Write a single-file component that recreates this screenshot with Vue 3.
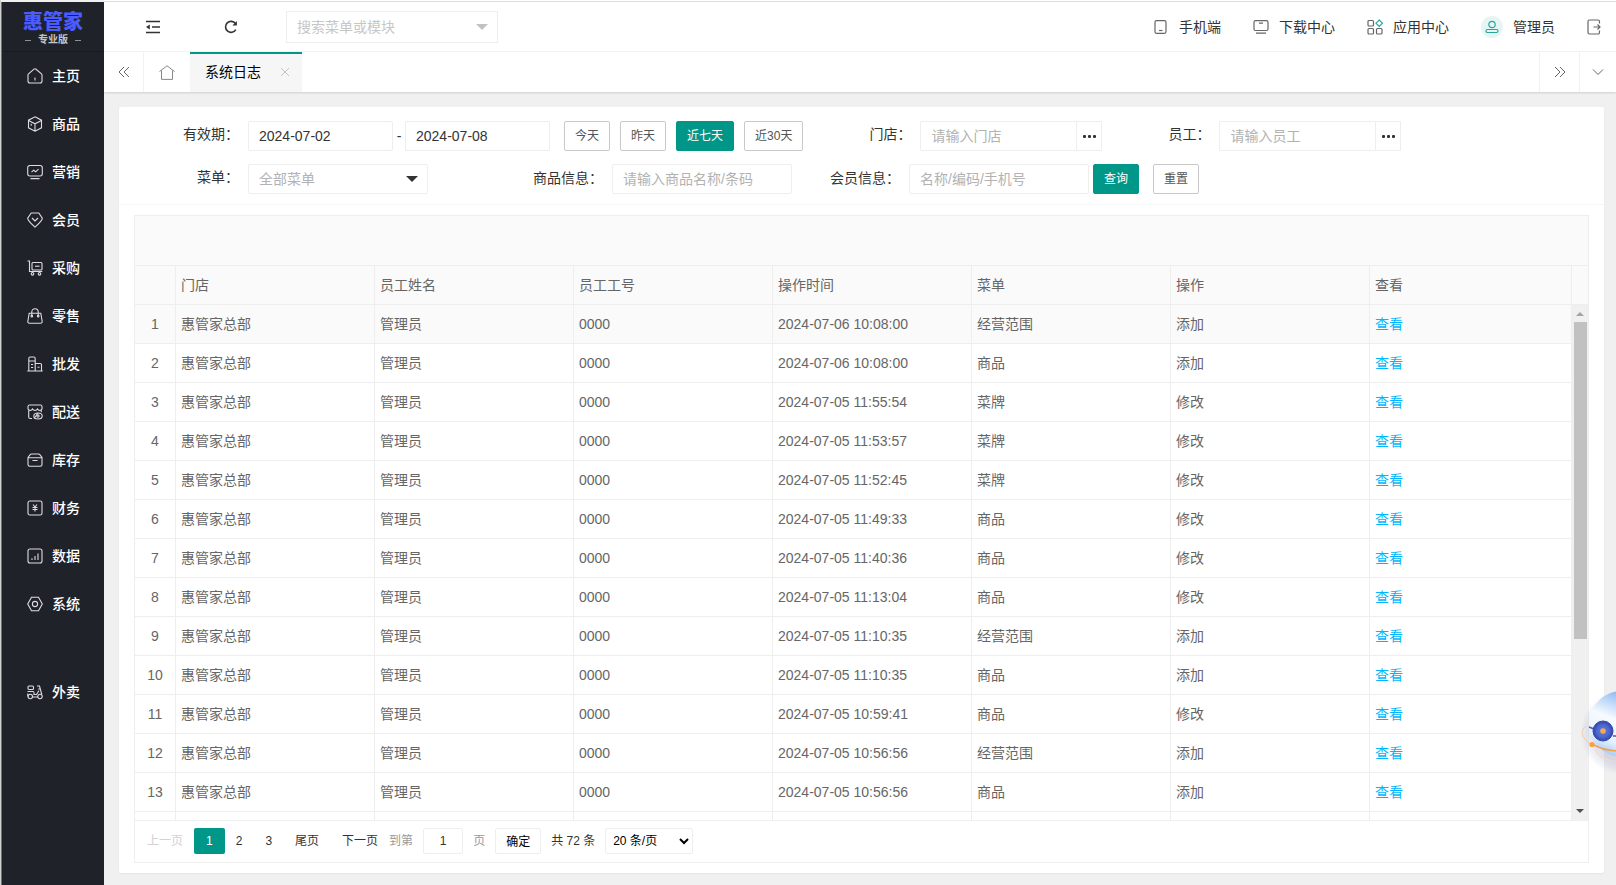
<script setup>
import { ref } from 'vue'

const menu = [
  { name: '主页', icon: 'home' },
  { name: '商品', icon: 'goods' },
  { name: '营销', icon: 'marketing' },
  { name: '会员', icon: 'member' },
  { name: '采购', icon: 'purchase' },
  { name: '零售', icon: 'retail' },
  { name: '批发', icon: 'wholesale' },
  { name: '配送', icon: 'delivery' },
  { name: '库存', icon: 'stock' },
  { name: '财务', icon: 'finance' },
  { name: '数据', icon: 'data' },
  { name: '系统', icon: 'system' },
  { name: '外卖', icon: 'takeout', apart: true }
]

const icons = {
  home: '<path d="M1.5 5.8 7 1.2a1.6 1.6 0 0 1 2 0l5.500 4.600a1.500 1.500 0 0 1 .5 1.200v6a2 2 0 0 1-2 2H3a2 2 0 0 1-2-2V7a1.500 1.500 0 0 1 .5-1.200zM8 9.500v3"/>',
  goods: '<path d="M8 .8 14.500 4.200v7.600L8 15.200 1.500 11.800V4.200zM1.500 4.400 8 7.800l6.500-3.400M8 7.800v7.200M4.200 7.800v2"/>',
  marketing: '<rect x=".7" y="1.500" width="14.600" height="10.500" rx="2.200"/><path d="M3.500 14.600h9M4.500 8.200l2.200-2 2 1.600 2.800-2.600"/>',
  member: '<path d="M4.200 1h7.600l3.500 5.200c0 2.500-4.500 6.300-7.300 9C5.200 12.500.7 8.700.7 6.200zM5 6l3 3 3-3"/>',
  purchase: '<path d="M.5 1h2v10.500h12.800"/><rect x="5" y="2.500" width="10" height="7.500" rx="1"/><path d="M8 6.200h4.500"/><circle cx="5.500" cy="13.800" r="1.300"/><circle cx="12.500" cy="13.800" r="1.300"/>',
  retail: '<path d="M2.200 5.200h11.600l1.400 8.300a1.500 1.500 0 0 1-1.500 1.700H2.300a1.500 1.500 0 0 1-1.500-1.700zM4.800 8.200V4a3.200 3.200 0 0 1 6.400 0v4.200"/><circle cx="4.800" cy="8.200" r=".8"/><circle cx="11.200" cy="8.200" r=".8"/>',
  wholesale: '<path d="M.3 15h15.400M1.800 15V2.500A1.500 1.500 0 0 1 3.300 1h3.400a1.500 1.500 0 0 1 1.500 1.500V15M8.200 7.500h5a1.300 1.300 0 0 1 1.300 1.300V15M1.800 5h6.400M4 8.500h2.200M4 11.500h2.200M10.500 11.300h2"/>',
  delivery: '<path d="M2.500 1h11a1.500 1.500 0 0 1 1.500 1.300V5c-1 1.900-3.500 1.900-4.500 0-1 1.900-4 1.900-5 0C4.500 6.900 2 6.900 1 5V2.300A1.500 1.500 0 0 1 2.500 1zM1.700 6.500V13a1.500 1.500 0 0 0 1.500 1.500H5M14.300 6.500v1.800"/><ellipse cx="11" cy="12" rx="4.200" ry="3"/><circle cx="11" cy="12" r="1.100"/><path d="M7 14.500 11 9"/>',
  stock: '<path d="M1 5.500 3 2.800A2 2 0 0 1 4.700 2h6.600a2 2 0 0 1 1.700.8l2 2.700V12.500a1.700 1.700 0 0 1-1.700 1.700H2.700A1.700 1.700 0 0 1 1 12.500zM1 5.800h14M5.500 8.500h5"/>',
  finance: '<rect x="1" y="1" width="14" height="14" rx="1.800"/><path d="M6 4.500 8 7l2-2.500M8 7v4.500M5.500 7.500h5M5.500 9.500h5"/>',
  data: '<rect x="1" y="1" width="14" height="14" rx="2"/><path d="M5 10.200V12M8 8v4M11 5.500V12"/>',
  system: '<path d="M4.500 1.200h7L15.300 8l-3.800 6.800h-7L.7 8z"/><circle cx="8" cy="8" r="2.600"/>',
  takeout: '<rect x="1" y="2" width="5.500" height="3.500" rx="1"/><path d="M.5 7.500H6a1.500 1.500 0 0 1 1 1.500v1.500h2.500L12 6.500M10 2h2.500l2.300 8.500M11.300 5h2.200M.8 9.500v3M5.500 13h5.500"/><circle cx="3.300" cy="12.500" r="2.200"/><circle cx="13" cy="12.500" r="2.200"/>'
}

const rangeButtons = ['今天', '昨天', '近七天', '近30天']
const activeRange = ref('近七天')
const dateFrom = ref('2024-07-02')
const dateTo = ref('2024-07-08')
const jumpPage = ref('1')

const columns = ['门店', '员工姓名', '员工工号', '操作时间', '菜单', '操作', '查看']
const rows = [
  ['2024-07-06 10:08:00', '经营范围', '添加'],
  ['2024-07-06 10:08:00', '商品', '添加'],
  ['2024-07-05 11:55:54', '菜牌', '修改'],
  ['2024-07-05 11:53:57', '菜牌', '修改'],
  ['2024-07-05 11:52:45', '菜牌', '修改'],
  ['2024-07-05 11:49:33', '商品', '修改'],
  ['2024-07-05 11:40:36', '商品', '修改'],
  ['2024-07-05 11:13:04', '商品', '修改'],
  ['2024-07-05 11:10:35', '经营范围', '添加'],
  ['2024-07-05 11:10:35', '商品', '添加'],
  ['2024-07-05 10:59:41', '商品', '修改'],
  ['2024-07-05 10:56:56', '经营范围', '添加'],
  ['2024-07-05 10:56:56', '商品', '添加']
].map(([time, module, action]) => ({ store: '惠管家总部', staff: '管理员', code: '0000', time, module, action }))
</script>

<template>
  <div class="app">
    <aside class="sidebar">
      <div class="logo">
        <strong>惠管家</strong>
        <span class="edition">专业版</span>
      </div>
      <nav>
        <a v-for="m in menu" :key="m.name" href="#" class="menu-item" :class="{ apart: m.apart }">
          <svg viewBox="0 0 16 16" v-html="icons[m.icon]"></svg>
          <span>{{ m.name }}</span>
        </a>
      </nav>
    </aside>

    <div class="main">
      <header class="topbar">
        <button type="button" class="icon-btn" aria-label="收起菜单">
          <svg width="14" height="14" viewBox="0 0 14 14" stroke="#333" stroke-width="1.500" fill="none">
            <path d="M0 1.500h14M6 6.900h8M0 12.500h14" /><path d="M0 7 3.800 4.500v5z" fill="#333" stroke="none" />
          </svg>
        </button>
        <button type="button" class="icon-btn refresh" aria-label="刷新">
          <svg width="14" height="14" viewBox="0 0 14 14" stroke="#333" stroke-width="1.600" fill="none">
            <path d="M11.800 9.600A5.500 5.500 0 1 1 11.500 3.600" /><path d="M12.900.9v4.500H8.400z" fill="#333" stroke="none" />
          </svg>
        </button>
        <div class="menu-search">
          <input type="text" placeholder="搜索菜单或模块" aria-label="搜索菜单或模块" />
          <svg class="caret" width="12" height="6" viewBox="0 0 12 6"><path d="M0 0h12L6 6z" fill="#c2c2c2" /></svg>
        </div>
        <div class="top-links">
          <a href="#">
            <svg viewBox="0 0 16 16"><rect x="2" y="1.700" width="11" height="12.600" rx="1.500" /><path d="M6 11.500h3.500" /></svg>手机端
          </a>
          <a href="#">
            <svg viewBox="0 0 16 16"><rect x="1" y="1.700" width="14" height="9.800" rx="1.500" /><path d="M6 4.200h4M3 14.200h10" /></svg>下载中心
          </a>
          <a href="#">
            <svg viewBox="0 0 16 16">
              <rect x="1" y="1.500" width="5.500" height="5.500" rx="1" /><rect x="1" y="9.500" width="5.500" height="5.500" rx="1" />
              <rect x="9.500" y="9.500" width="5.500" height="5.500" rx="1" /><path class="teal" d="M12.200 1 15.400 4.200 12.200 7.400 9 4.200z" />
            </svg>应用中心
          </a>
          <a href="#">
            <span class="avatar">
              <svg viewBox="0 0 16 16"><circle class="teal" cx="8" cy="5.500" r="3.200" /><rect class="teal" x="2" y="10.500" width="12" height="3" rx="1.500" /></svg>
            </span>管理员
          </a>
          <button type="button" class="exit" aria-label="退出">
            <svg viewBox="0 0 14 16"><path d="M12.500 4.500V2.500A1.500 1.500 0 0 0 11 1H2.500A1.500 1.500 0 0 0 1 2.500v11A1.500 1.500 0 0 0 2.500 15H11a1.500 1.500 0 0 0 1.500-1.500v-2M6.500 8H13M10.500 5.500 13 8l-2.500 2.500" /></svg>
          </button>
        </div>
      </header>

      <div class="tabs">
        <button type="button" class="tab-ctl prev" aria-label="向左">
          <svg width="12" height="12" viewBox="0 0 12 12"><path d="M6 1 1 6l5 5M11 1 6 6l5 5" /></svg>
        </button>
        <button type="button" class="tab-ctl home" aria-label="主页">
          <svg width="16" height="15" viewBox="0 0 16 15"><path d="M.5 6.500 8 .8l7.500 5.700M2.500 5.500v8.900h11V5.500" /></svg>
        </button>
        <div class="tab">
          <span>系统日志</span>
          <button type="button" aria-label="关闭">
            <svg width="8" height="8" viewBox="0 0 8 8"><path d="M0 0l8 8M8 0 0 8" /></svg>
          </button>
        </div>
        <button type="button" class="tab-ctl next" aria-label="向右">
          <svg width="12" height="12" viewBox="0 0 12 12"><path d="M1 1l5 5-5 5M6 1l5 5-5 5" /></svg>
        </button>
        <button type="button" class="tab-ctl more" aria-label="更多">
          <svg width="12" height="12" viewBox="0 0 12 12"><path d="M1 3.500l5 5 5-5" /></svg>
        </button>
      </div>

      <main class="card">
        <form class="filters" @submit.prevent>
          <div class="filter-row">
            <label class="first raised" for="from">有效期：</label>
            <input id="from" v-model="dateFrom" class="date" type="text" />
            <span class="dash">-</span>
            <input v-model="dateTo" class="date" type="text" aria-label="结束日期" />
            <div class="ranges">
              <button
                v-for="r in rangeButtons" :key="r" type="button" class="btn" :class="{ primary: r === activeRange }"
                @click="activeRange = r"
              >{{ r }}</button>
            </div>
            <label class="raised" for="store">门店：</label>
            <div class="picker"><input id="store" type="text" placeholder="请输入门店" /><button type="button" aria-label="选择门店"><i></i><i></i><i></i></button></div>
            <label class="raised" for="staff">员工：</label>
            <div class="picker"><input id="staff" type="text" placeholder="请输入员工" /><button type="button" aria-label="选择员工"><i></i><i></i><i></i></button></div>
          </div>
          <div class="filter-row">
            <label class="first raised" for="module">菜单：</label>
            <div class="select-box">
              <select id="module"><option>全部菜单</option></select>
              <svg class="caret" width="12" height="6" viewBox="0 0 12 6"><path d="M0 0h12L6 6z" fill="#333" /></svg>
            </div>
            <label class="wide" for="goods">商品信息：</label>
            <input id="goods" class="text" type="text" placeholder="请输入商品名称/条码" />
            <label for="member">会员信息：</label>
            <input id="member" class="text" type="text" placeholder="名称/编码/手机号" />
            <div class="submit">
              <button type="submit" class="btn primary">查询</button>
              <button type="reset" class="btn">重置</button>
            </div>
          </div>
        </form>

        <section class="grid">
          <div class="grid-tools"></div>
          <div class="grid-head">
            <table>
              <colgroup><col class="c-no" /><col v-for="n in 6" :key="n" class="c-std" /><col /></colgroup>
              <thead>
                <tr><th></th><th v-for="c in columns" :key="c">{{ c }}</th></tr>
              </thead>
            </table>
            <div class="head-gap"></div>
          </div>
          <div class="grid-body">
            <div class="rows">
              <table aria-label="系统日志">
                <colgroup><col class="c-no" /><col v-for="n in 6" :key="n" class="c-std" /><col /></colgroup>
                <tbody>
                  <tr v-for="(r, i) in rows" :key="i" :class="{ hover: i === 0 }">
                    <td class="no">{{ i + 1 }}</td>
                    <td>{{ r.store }}</td>
                    <td>{{ r.staff }}</td>
                    <td>{{ r.code }}</td>
                    <td>{{ r.time }}</td>
                    <td>{{ r.module }}</td>
                    <td>{{ r.action }}</td>
                    <td><a href="#">查看</a></td>
                  </tr>
                  <tr><td v-for="n in 8" :key="n"></td></tr>
                </tbody>
              </table>
            </div>
            <div class="scrollbar">
              <svg width="8" height="4" viewBox="0 0 8 4"><path d="M0 4h8L4 0z" fill="#a3a3a3" /></svg>
              <div class="track"><div class="thumb"></div></div>
              <svg width="8" height="4" viewBox="0 0 8 4"><path d="M0 0h8L4 4z" fill="#505050" /></svg>
            </div>
          </div>
          <div class="pager">
            <button type="button" class="page" disabled>上一页</button>
            <button type="button" class="page current">1</button>
            <button type="button" class="page">2</button>
            <button type="button" class="page">3</button>
            <button type="button" class="page">尾页</button>
            <button type="button" class="page">下一页</button>
            <label for="jump">到第</label>
            <input id="jump" v-model="jumpPage" type="text" />
            <span class="unit">页</span>
            <button type="button" class="go">确定</button>
            <span class="total">共 72 条</span>
            <select aria-label="每页条数"><option>20 条/页</option></select>
          </div>
        </section>
      </main>
    </div>

    <svg class="assistant" width="44" height="100" viewBox="0 0 44 100" aria-hidden="true">
      <defs>
        <linearGradient id="ball" x1=".75" y1="0" x2=".35" y2="1">
          <stop offset="0" stop-color="#6d9fee" /><stop offset=".25" stop-color="#b4d2f8" /><stop offset=".5" stop-color="#f7fbff" /><stop offset=".8" stop-color="#e3f2fd" /><stop offset="1" stop-color="#a9c8f2" />
        </linearGradient>
        <radialGradient id="shade"><stop offset=".7" stop-color="#7f86bd" stop-opacity=".24" /><stop offset="1" stop-color="#7f86bd" stop-opacity="0" /></radialGradient>
        <radialGradient id="eye"><stop offset="0" stop-color="#5f7fe0" /><stop offset=".6" stop-color="#4d68d0" /><stop offset="1" stop-color="#3345a8" /></radialGradient>
      </defs>
      <circle cx="50" cy="53" r="42" fill="url(#shade)" />
      <circle cx="50" cy="44" r="33" fill="url(#ball)" />
      <path d="M17 47l5 2M41 56h3" stroke="#4a5bb8" stroke-width="1.500" />
      <circle cx="31" cy="51" r="10" fill="url(#eye)" stroke="#3548ae" stroke-width="1" />
      <circle cx="31" cy="51" r="2.800" fill="#f6a94f" />
      <path d="M14 46C7 51 10 59 20 65" fill="none" stroke="#f3c9a4" stroke-width="1" />
      <path d="M20 64q10 6 24 7" fill="none" stroke="#f7a04a" stroke-width="1.500" />
      <path d="M24 69q-1 8 20 13" fill="none" stroke="#f8d9c4" stroke-width="1.200" />
      <circle cx="20" cy="64.500" r="2.600" fill="#f9a040" />
    </svg>
  </div>
</template>

<style>
body {
  margin: 0;
  background: #f0f0f0;
}
</style>

<style scoped>
.app,
.app * {
  box-sizing: border-box;
}
.app {
  display: flex;
  height: 100vh;
  min-height: 600px;
  overflow: hidden;
  border-left: 1px solid #cfd2cf;
  font: 14px/24px "Liberation Sans", "Noto Sans CJK SC", sans-serif;
  color: #333;
}
button,
input,
select {
  margin: 0;
  font: inherit;
  color: inherit;
  outline: 0;
}
button {
  padding: 0;
  border: 0;
  background: none;
  cursor: pointer;
}
a {
  color: inherit;
  text-decoration: none;
}
svg {
  display: block;
  flex: none;
}

.sidebar {
  flex: none;
  width: 103px;
  margin-top: 2px;
  border-left: 1px solid #6e7375;
  background: #20222a;
  color: #fff;
}
.logo {
  display: flex;
  flex-direction: column;
  align-items: center;
  height: 50px;
  padding-top: 9px;
  border-bottom: 1px solid #1a1c23;
}
.logo strong {
  font-size: 20px;
  line-height: 22px;
  font-weight: 900;
  color: #4a5cff;
}
.edition {
  display: flex;
  align-items: center;
  gap: 7px;
  font-size: 10px;
  line-height: 14px;
  font-weight: 700;
  color: #c4c6ca;
}
.edition::before,
.edition::after {
  content: "";
  width: 6px;
  height: 1px;
  background: #8e9096;
}
.menu-item {
  display: flex;
  align-items: center;
  gap: 9px;
  height: 48px;
  padding-left: 25px;
  font-weight: 500;
}
.menu-item.apart {
  margin-top: 40px;
}
.menu-item svg {
  width: 16px;
  height: 16px;
  fill: none;
  stroke: #dcdde0;
  stroke-width: 1.1;
}

.main {
  display: flex;
  flex: 1;
  flex-direction: column;
  min-width: 0;
  padding-top: 1px;
  background: linear-gradient(#fff, #fff) 0 0 / 100% 1px no-repeat #f0f0f0;
}
.topbar {
  display: flex;
  flex: none;
  align-items: center;
  height: 51px;
  padding-right: 15px;
  border-top: 1px solid #dcdcdc;
  border-bottom: 1px solid #f4f4f4;
  background: #fff;
}
.icon-btn {
  display: flex;
  align-items: center;
  justify-content: center;
  width: 40px;
  height: 40px;
  margin-left: 29px;
}
.icon-btn.refresh {
  margin-left: 38px;
}
.menu-search {
  position: relative;
  width: 212px;
  margin-left: 35px;
}
.menu-search input {
  display: block;
  width: 100%;
  height: 32px;
  padding: 0 10px;
  border: 1px solid #eee;
  background: #fff;
}
.menu-search input::placeholder {
  color: #c6c6c6;
}
.caret {
  position: absolute;
  top: 50%;
  right: 10px;
  margin-top: -3px;
  pointer-events: none;
}
.top-links {
  display: flex;
  align-items: center;
  gap: 32px;
  margin-left: auto;
}
.top-links a {
  display: flex;
  align-items: center;
  gap: 10px;
}
.top-links svg {
  width: 16px;
  height: 16px;
  fill: none;
  stroke: #666;
  stroke-width: 1.2;
}
.top-links .exit svg {
  width: 14px;
}
.top-links .teal {
  stroke: #2aa79b;
}
.avatar {
  display: flex;
  align-items: center;
  justify-content: center;
  width: 22px;
  height: 22px;
  border-radius: 50%;
  background: #e6f5f3;
}

.tabs {
  display: flex;
  flex: none;
  height: 40px;
  background: #fff;
  box-shadow: 0 1px 2px rgba(0, 0, 0, 0.14);
}
.tabs svg {
  fill: none;
  stroke: #666;
  stroke-width: 1;
}
.tab-ctl {
  display: flex;
  align-items: center;
  justify-content: center;
  width: 40px;
  border-left: 1px solid #f2f2f2;
}
.tab-ctl.prev {
  width: 39px;
  border-left: 0;
}
.tab-ctl.home {
  width: 47px;
}
.tab-ctl.home svg {
  stroke: #888;
}
.tab-ctl.next {
  margin-left: auto;
}
.tab-ctl.more {
  width: 37px;
}
.tab {
  display: flex;
  align-items: center;
  gap: 20px;
  padding: 0 13px 2px 15px;
  border-top: 2px solid #009688;
  background: #f6f6f6;
  color: #000;
}
.tab svg {
  stroke: #c2c2c2;
}

.card {
  display: flex;
  flex: 1;
  flex-direction: column;
  min-height: 0;
  margin: 15px 12px 12px 15px;
  border-radius: 2px;
  background: #fff;
  box-shadow: 0 1px 2px rgba(0, 0, 0, 0.05);
}
.filters {
  display: flex;
  flex: none;
  flex-direction: column;
  gap: 13px;
  padding: 14px 0 10px;
  border-bottom: 1px solid #f6f6f6;
}
.filter-row {
  display: flex;
  flex-wrap: wrap;
}
.filter-row label {
  width: 117px;
  padding-right: 9px;
  line-height: 28px;
  text-align: right;
}
.filter-row label.raised {
  line-height: 26px;
}
.filter-row label.first {
  width: 129px;
}
.filter-row label.wide {
  width: 184px;
}
.filters input,
.filters select {
  height: 30px;
  padding: 0 10px;
  border: 1px solid #eee;
  border-radius: 2px;
  background: #fff;
}
.filters input::placeholder {
  color: #b2b2b2;
}
.filters input.date {
  width: 145px;
}
.filters input.text {
  width: 180px;
}
.dash {
  width: 12px;
  line-height: 30px;
  text-align: center;
}
.ranges {
  display: flex;
  gap: 10px;
  margin-left: 14px;
}
.btn {
  height: 30px;
  padding: 0 10px;
  border: 1px solid #c9c9c9;
  border-radius: 2px;
  background: #fff;
  font-size: 12px;
  color: #555;
}
.btn.primary {
  border-color: #009688;
  background: #009688;
  color: #fff;
}
.picker {
  display: flex;
  width: 182px;
}
.picker input {
  flex: 1;
  min-width: 0;
  border-right: 0;
  border-radius: 2px 0 0 2px;
}
.picker button {
  display: flex;
  align-items: center;
  justify-content: center;
  gap: 2px;
  width: 26px;
  height: 30px;
  border: 1px solid #eee;
}
.picker i {
  width: 3px;
  height: 3px;
  border-radius: 1px;
  background: #333;
}
.select-box {
  position: relative;
  width: 180px;
}
.select-box select {
  display: block;
  width: 100%;
  appearance: none;
  color: #b2b2b2;
}
.submit {
  display: flex;
  gap: 14px;
  margin-left: 4px;
}

.grid {
  display: flex;
  flex: 1;
  flex-direction: column;
  min-height: 0;
  margin: 10px 15px;
  border: 1px solid #eee;
  color: #666;
}
.grid-tools {
  flex: none;
  height: 50px;
  border-bottom: 1px solid #eee;
  background: #fafafa;
}
.grid-head {
  display: flex;
  flex: none;
  background: #fafafa;
}
.head-gap {
  flex: none;
  width: 16px;
  border-bottom: 1px solid #eee;
}
table {
  width: 100%;
  table-layout: fixed;
  border-collapse: separate;
  border-spacing: 0;
}
.grid-head table {
  flex: 1;
  min-width: 0;
}
.c-no {
  width: 41px;
}
.c-std {
  width: 199px;
}
th,
td {
  height: 39px;
  padding: 0 5px;
  border-right: 1px solid #eee;
  border-bottom: 1px solid #eee;
  font-weight: 400;
  text-align: left;
  white-space: nowrap;
}
td.no {
  text-align: center;
}
td a {
  color: #00b7ff;
}
tr.hover {
  background: #fafafa;
}
.grid-body {
  display: flex;
  flex: 1;
  min-height: 0;
}
.rows {
  flex: 1;
  min-width: 0;
  overflow: hidden;
}
.scrollbar {
  display: flex;
  flex: none;
  flex-direction: column;
  align-items: center;
  justify-content: space-between;
  width: 16px;
  padding: 7px 0;
  background: #f0f0f0;
}
.track {
  flex: 1;
  width: 13px;
  margin: 6px 0;
}
.thumb {
  height: 66%;
  background: #c1c1c1;
}

.pager {
  display: flex;
  flex: none;
  align-items: flex-start;
  height: 42px;
  padding-top: 7px;
  border-top: 1px solid #eee;
  font-size: 12px;
  line-height: 26px;
  color: #333;
}
.pager .page {
  height: 26px;
  margin-right: -1px;
  padding: 0 12px;
}
.pager .page:disabled {
  color: #d2d2d2;
}
.pager .page.current {
  border-radius: 2px;
  background: #009688;
  color: #fff;
}
.pager label,
.pager .unit {
  color: #999;
}
.pager input {
  width: 40px;
  height: 26px;
  margin: 0 10px;
  padding: 0;
  border: 1px solid #eee;
  border-radius: 2px;
  text-align: center;
}
.pager .go {
  height: 26px;
  margin: 0 10px;
  padding: 0 10px;
  border: 1px solid #eee;
  border-radius: 2px;
  color: #000;
}
.pager select {
  width: 88px;
  height: 26px;
  margin-left: 10px;
  padding: 0 3px;
  border: 1px solid #eee;
  border-radius: 2px;
  background: #fff;
  color: #000;
}

.assistant {
  position: fixed;
  right: 0;
  bottom: 105px;
}
</style>
